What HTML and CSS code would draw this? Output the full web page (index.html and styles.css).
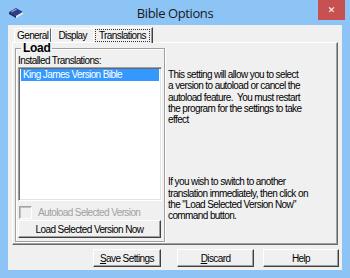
FILE: index.html
```html
<!DOCTYPE html>
<html lang="en">
<head>
    <meta charset="UTF-8">
    <title>Bible Options</title>
    <link rel="stylesheet" href="styles.css">
</head>
<body>

<div class="window">
    <!-- Title Bar -->
    <div class="titlebar">
        <div class="app-icon">
            <svg width="16" height="14" viewBox="0 0 16 14">
                <path d="M1 6 L8 2 L15 6 L8 10 Z" fill="#2a3f8f"/>
                <path d="M1 6 L8 10 L8 12 L1 8 Z" fill="#1b275c"/>
                <path d="M8 10 L15 6 L15 8 L8 12 Z" fill="#e8e8e8"/>
                <path d="M3 5.5 L8 3 L9 3.5 L4 6 Z" fill="#c9c9c9"/>
            </svg>
        </div>
        <div class="title">Bible Options</div>
        <div class="title-right">
            <div class="close-btn">&#x2715;</div>
        </div>
    </div>

    <!-- Client Area -->
    <div class="client">
        <div class="tabs">
            <div class="tab tab-general">General</div>
            <div class="tab tab-display">Display</div>
            <div class="tab active"><span class="focus">Translations</span></div>
        </div>

        <div class="tab-panel">
            <fieldset class="group">
                <legend>Load</legend>
                <div class="label">Installed Translations:</div>
                <div class="listbox">
                    <div class="list-item selected">King James Version Bible</div>
                </div>
                <label class="check disabled">
                    <span class="checkbox"></span>
                    Autoload Selected Version
                </label>
                <button class="btn wide">Load Selected Version Now</button>
            </fieldset>

            <div class="info">
                <p class="info-top">This setting will allow you to select<br>a version to autoload or cancel the<br>autoload feature.&nbsp; You must restart<br>the program for the settings to take<br>effect</p>
                <p class="info-bottom">If you wish to switch to another<br>translation immediately, then click on<br>the "Load Selected Version Now"<br>command button.</p>
            </div>
        </div>

        <div class="buttons">
            <button class="btn save"><u>S</u>ave Settings</button>
            <button class="btn discard"><u>D</u>iscard</button>
            <button class="btn help">Help</button>
        </div>
    </div>
</div>

</body>
</html>
```

FILE: styles.css
```css
html, body {
    margin: 0;
    padding: 0;
    font-family: "Liberation Sans", Arial, sans-serif;
    font-size: 10px;
    letter-spacing: -0.6px;
    color: #000;
}

/* Window frame */
.window {
    width: 350px;
    height: 278px;
    background: #8cc4f6;
    display: flex;
    flex-direction: column;
    box-sizing: border-box;
}

.titlebar {
    height: 25px;
    display: grid;
    grid-template-columns: 1fr auto 1fr;
    align-items: start;
}

.app-icon {
    padding: 6px 0 0 8px;
}

.title {
    font-family: "Open Sans", "Noto Sans", sans-serif;
    font-size: 13px;
    letter-spacing: -0.4px;
    line-height: 27px;
    color: #1a1a1a;
}

.title-right {
    display: flex;
    justify-content: flex-end;
    padding-right: 5px;
}

.close-btn {
    width: 27px;
    height: 20px;
    background: #c75050;
    color: #fff;
    font-family: "DejaVu Sans", sans-serif;
    font-size: 9px;
    font-weight: bold;
    letter-spacing: 0;
    text-align: center;
    line-height: 20px;
}

/* Client area */
.client {
    flex: 1;
    margin: 0 8px 8px 8px;
    background: #f0f0f0;
    padding: 2px 2px 0 4px;
    display: flex;
    flex-direction: column;
}

/* Tabs */
.tabs {
    display: flex;
    align-items: flex-end;
    height: 15px;
    padding-left: 2px;
    position: relative;
    z-index: 1;
}

.tab {
    height: 13px;
    line-height: 13px;
    padding: 0 4px;
    border-left: 1px solid #fff;
    border-top: 1px solid #fff;
    border-right: 1px solid #696969;
    background: #f0f0f0;
    white-space: nowrap;
}

.tab-general {
    padding: 0 2px;
}

.tab-display {
    padding: 0 6px;
}

.tab.active {
    height: 15px;
    line-height: 15px;
    margin-bottom: -1px;
    margin-left: -1px;
    padding: 0 2px 0 1px;
    border-right-color: #404040;
    box-shadow: inset -1px 0 0 #a0a0a0;
}

.tab .focus {
    border: 1px dotted #333;
    padding: 0 3px;
}

.tab-panel {
    height: 201px;
    border-left: 1px solid #fff;
    border-top: 1px solid #fff;
    border-right: 1px solid #696969;
    border-bottom: 1px solid #696969;
    box-shadow: inset -1px -1px 0 #a0a0a0;
    margin-right: 2px;
    display: flex;
    padding: 0 2px;
}

/* Group box */
.group {
    width: 150px;
    margin: 0;
    padding: 0 2px 3px 2px;
    border: 1px solid #a0a0a0;
    box-shadow: 1px 1px 0 #fff, inset 1px 1px 0 #fff;
    display: flex;
    flex-direction: column;
    height: 199px;
    box-sizing: border-box;
}

.group legend {
    font-weight: bold;
    font-size: 12px;
    letter-spacing: -0.3px;
    padding: 0 2px;
    margin-left: 3px;
    line-height: 11px;
}

.label {
    line-height: 12px;
    margin-top: 1px;
}

.listbox {
    height: 130px;
    background: #fff;
    border-left: 1px solid #a0a0a0;
    border-top: 1px solid #a0a0a0;
    border-right: 1px solid #fff;
    border-bottom: 1px solid #fff;
    box-shadow: inset 1px 1px 0 #696969, inset -1px -1px 0 #e3e3e3;
    padding: 1px 2px;
}

.list-item {
    line-height: 12px;
    padding: 0 2px;
}

.list-item.selected {
    background: #3399ff;
    color: #fff;
}

.check {
    display: flex;
    align-items: center;
    gap: 6px;
    margin-top: 4px;
    height: 14px;
    white-space: nowrap;
}

.check.disabled {
    color: #a0a0a0;
}

.checkbox {
    width: 11px;
    height: 11px;
    background: #f0f0f0;
    border-left: 1px solid #a0a0a0;
    border-top: 1px solid #a0a0a0;
    border-right: 1px solid #fff;
    border-bottom: 1px solid #fff;
    box-shadow: inset 1px 1px 0 #c0c0c0;
    margin-left: 1px;
}

/* Buttons */
.btn {
    font-family: "Liberation Sans", Arial, sans-serif;
    font-size: 10px;
    letter-spacing: -0.6px;
    color: #000;
    background: #f0f0f0;
    height: 18px;
    padding: 0;
    white-space: nowrap;
    border-left: 1px solid #fff;
    border-top: 1px solid #fff;
    border-right: 1px solid #404040;
    border-bottom: 1px solid #404040;
    box-shadow: inset -1px -1px 0 #a0a0a0;
}

.btn.wide {
    margin-top: auto;
    width: 143px;
}

.info {
    flex: 1;
    padding-left: 3px;
    display: flex;
    flex-direction: column;
}

.info p {
    margin: 0;
    line-height: 11.3px;
}

.info-top {
    margin-top: 26px !important;
}

.info-bottom {
    margin-top: 51px !important;
}

.buttons {
    display: flex;
    gap: 9px;
    padding: 4px 0 0 81px;
}

.btn.save {
    width: 68px;
    margin-right: 7px;
}

.btn.discard {
    width: 77px;
}

.btn.help {
    width: 76px;
}
```
